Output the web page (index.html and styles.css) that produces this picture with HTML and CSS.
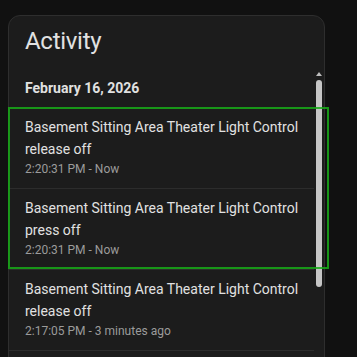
FILE: index.html
```html
<!DOCTYPE html>
<html lang="en">
<head>
<meta charset="UTF-8">
<meta name="viewport" content="width=device-width, initial-scale=1.0">
<title>Activity</title>
<link rel="stylesheet" href="styles.css">
</head>
<body>

<div class="card">
  <h2 class="card-header">Activity</h2>

  <div class="scroll-area">
    <div class="list">
      <div class="day">February 16, 2026</div>

      <div class="entry">
        <div class="entry-text">Basement Sitting Area Theater Light Control release off</div>
        <div class="entry-time">2:20:31 PM - Now</div>
      </div>
      <div class="entry">
        <div class="entry-text">Basement Sitting Area Theater Light Control press off</div>
        <div class="entry-time">2:20:31 PM - Now</div>
      </div>
      <div class="entry">
        <div class="entry-text">Basement Sitting Area Theater Light Control release off</div>
        <div class="entry-time">2:17:05 PM - 3 minutes ago</div>
      </div>
    </div>

    <div class="scrollbar">
      <div class="scroll-arrow"></div>
      <div class="scroll-thumb"></div>
    </div>
  </div>

  <!-- highlight around the newest entries -->
  <div class="new-highlight"></div>
</div>

</body>
</html>
```

FILE: styles.css
```css
html, body {
  margin: 0;
  height: 100%;
  overflow: hidden;
}
body {
  background-color: #111111;
  font-family: Roboto, "Noto Sans", Arial, sans-serif;
  color: #e1e1e1;
  padding: 15px 8px 0;
  box-sizing: border-box;
}
.card {
  position: relative;
  width: 317px;
  box-sizing: border-box;
  background-color: #1c1c1c;
  border: 1px solid #2e2e2e;
  border-radius: 12px;
}
.card-header {
  margin: 0;
  padding: 9px 16px 0;
  font-size: 24px;
  font-weight: 400;
  line-height: 32px;
  letter-spacing: -0.012em;
  color: #e1e1e1;
  height: 47px;
}
.scroll-area {
  display: flex;
  height: 420px;
  overflow: hidden;
}
.list {
  flex: 1;
  min-width: 0;
}
.day {
  padding: 6px 16px 10px;
  font-size: 14px;
  font-weight: 700;
  line-height: 20px;
}
.entry {
  padding: 8px 10px 10px 16px;
  border-bottom: 1px solid #2c2c2c;
}
.entry-text {
  font-size: 14px;
  line-height: 22px;
  color: #e1e1e1;
}
.entry-time {
  font-size: 12px;
  line-height: 18px;
  color: #9b9b9b;
}
.scrollbar {
  width: 10px;
  display: flex;
  flex-direction: column;
  align-items: center;
}
.scroll-arrow {
  width: 0;
  height: 0;
  border-left: 3px solid transparent;
  border-right: 3px solid transparent;
  border-bottom: 4px solid #bdbdbd;
}
.scroll-thumb {
  margin-top: 4px;
  width: 6px;
  height: 207px;
  border-radius: 3px;
  background-color: #c6c6c6;
}
.new-highlight {
  position: absolute;
  left: -1px;
  top: 91px;
  width: 321px;
  height: 162px;
  box-sizing: border-box;
  border: 2px solid rgba(24, 172, 24, 0.85);
  pointer-events: none;
}
```
